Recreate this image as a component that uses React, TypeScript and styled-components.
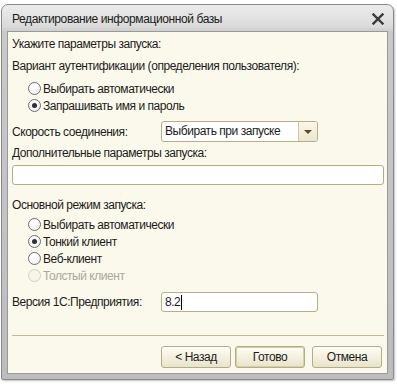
import styled, { createGlobalStyle } from 'styled-components';

const GlobalStyle = createGlobalStyle`
  html, body {
    margin: 0;
    padding: 0;
    background: #ffffff;
  }
  body {
    font-family: "Liberation Sans", Arial, sans-serif;
    font-size: 12px;
    letter-spacing: -0.45px;
    color: #1c1c1c;
  }
`;

const Page = styled.div`
  width: 397px;
  height: 385px;
  padding: 4px 0 0 1px;
  box-sizing: border-box;
`;

const Window = styled.div`
  width: 393px;
  height: 376px;
  box-sizing: border-box;
  display: flex;
  flex-direction: column;
  border-radius: 7px 7px 2px 2px;
  border: 1px solid #8a8a8a;
  background: linear-gradient(to bottom, #ececec 0px, #dadada 22px, #c9c9c9 27px, #bdbdbd 100%);
  padding: 0 5px 5px 5px;
  box-shadow: 1px 1px 2px rgba(0, 0, 0, 0.25);
`;

const TitleBar = styled.div`
  height: 26px;
  display: flex;
  align-items: center;
  justify-content: space-between;
  padding: 0 4px 0 5px;
`;

const Title = styled.div`
  font-size: 12px;
  letter-spacing: -0.4px;
  color: #202020;
  padding-top: 1px;
`;

const Close = styled.div`
  width: 12px;
  height: 12px;
  margin-top: 1px;
  display: flex;
`;

const Body = styled.div`
  flex: 1;
  background: #fbf9eb;
  border: 1px solid #9a9a9a;
  padding: 4px 3px 0 4px;
  display: flex;
  flex-direction: column;
`;

const Label = styled.div<{ $mt?: number }>`
  height: 17px;
  line-height: 17px;
  margin-top: ${(p) => p.$mt ?? 0}px;
  white-space: nowrap;
`;

const RadioList = styled.div<{ $mt?: number }>`
  display: flex;
  flex-direction: column;
  margin-top: ${(p) => p.$mt ?? 0}px;
  padding-left: 16px;
`;

const RadioRow = styled.div<{ $disabled?: boolean }>`
  height: 17px;
  display: flex;
  align-items: center;
  gap: 2px;
  color: ${(p) => (p.$disabled ? '#a8a8a0' : '#1c1c1c')};
`;

const RadioCircle = styled.span<{ $checked?: boolean; $disabled?: boolean }>`
  width: 11px;
  height: 11px;
  border-radius: 50%;
  border: 1px solid ${(p) => (p.$disabled ? '#d2d0c4' : '#6e6e6e')};
  background: ${(p) =>
    p.$disabled ? '#f7f5ea' : 'radial-gradient(circle at 40% 35%, #ffffff 30%, #e6e6e6 100%)'};
  display: flex;
  align-items: center;
  justify-content: center;
  flex-shrink: 0;
  &::after {
    content: '';
    width: 5px;
    height: 5px;
    border-radius: 50%;
    background: #303030;
    display: ${(p) => (p.$checked ? 'block' : 'none')};
  }
`;

const FieldRow = styled.div<{ $mt?: number }>`
  display: flex;
  align-items: center;
  margin-top: ${(p) => p.$mt ?? 0}px;
`;

const FieldLabel = styled.div`
  width: 149px;
  white-space: nowrap;
`;

const Combo = styled.div`
  width: 157px;
  height: 21px;
  box-sizing: border-box;
  border: 1px solid #b6ae86;
  border-radius: 3px;
  background: #ffffff;
  display: flex;
  align-items: stretch;
  overflow: hidden;
`;

const ComboText = styled.div`
  flex: 1;
  padding-left: 3px;
  line-height: 19px;
  white-space: nowrap;
`;

const ComboButton = styled.div`
  width: 18px;
  border-left: 1px solid #cfc8a4;
  background: linear-gradient(to bottom, #fbf8ea, #ece6cc);
  display: flex;
  align-items: center;
  justify-content: center;
  &::after {
    content: '';
    border-left: 4px solid transparent;
    border-right: 4px solid transparent;
    border-top: 4px solid #5a4a1e;
    margin-top: 1px;
  }
`;

const TextInput = styled.div<{ $width?: number; $mt?: number }>`
  width: ${(p) => (p.$width ? `${p.$width}px` : 'auto')};
  height: 20px;
  box-sizing: border-box;
  margin-top: ${(p) => p.$mt ?? 0}px;
  border: 1px solid #b6ae86;
  border-radius: 3px;
  background: #ffffff;
  padding-left: 3px;
  line-height: 18px;
  display: flex;
  align-items: center;
`;

const Caret = styled.span`
  width: 1px;
  height: 15px;
  background: #000000;
  margin-left: 1px;
`;

const Separator = styled.div`
  margin-top: 23px;
  height: 1px;
  background: #c2b993;
`;

const ButtonBar = styled.div`
  margin-top: 10px;
  display: flex;
  justify-content: flex-end;
  padding-right: 2px;
`;

const Button = styled.div<{ $default?: boolean; $ml?: number }>`
  width: 70px;
  height: 22px;
  box-sizing: border-box;
  margin-left: ${(p) => p.$ml ?? 0}px;
  border: 1px solid #b3ac8a;
  border-radius: 3px;
  background: linear-gradient(to bottom, #fefdf6, #f3efdd 55%, #e9e3ca);
  box-shadow: ${(p) => (p.$default ? 'inset 0 0 0 1px #d8cfa6' : 'none')};
  display: flex;
  align-items: center;
  justify-content: center;
  color: #1c1c1c;
`;

const radiosAuth = [
  { label: 'Выбирать автоматически', checked: false },
  { label: 'Запрашивать имя и пароль', checked: true },
];

const radiosMode = [
  { label: 'Выбирать автоматически', checked: false },
  { label: 'Тонкий клиент', checked: true },
  { label: 'Веб-клиент', checked: false },
  { label: 'Толстый клиент', checked: false, disabled: true },
];

export default function App() {
  return (
    <>
      <GlobalStyle />
      <Page>
        <Window>
          <TitleBar>
            <Title>Редактирование информационной базы</Title>
            <Close>
              <svg width="12" height="12" viewBox="0 0 12 12">
                <path d="M1.5 1.5 L10.5 10.5 M10.5 1.5 L1.5 10.5" stroke="#3a3a3a" strokeWidth="2.4" strokeLinecap="square" />
              </svg>
            </Close>
          </TitleBar>
          <Body>
            <Label>Укажите параметры запуска:</Label>
            <Label $mt={5}>Вариант аутентификации (определения пользователя):</Label>
            <RadioList $mt={5}>
              {radiosAuth.map((r) => (
                <RadioRow key={r.label}>
                  <RadioCircle $checked={r.checked} />
                  {r.label}
                </RadioRow>
              ))}
            </RadioList>
            <FieldRow $mt={7}>
              <FieldLabel>Скорость соединения:</FieldLabel>
              <Combo>
                <ComboText>Выбирать при запуске</ComboText>
                <ComboButton />
              </Combo>
            </FieldRow>
            <Label $mt={3}>Дополнительные параметры запуска:</Label>
            <TextInput $mt={3} />
            <Label $mt={12}>Основной режим запуска:</Label>
            <RadioList $mt={2}>
              {radiosMode.map((r) => (
                <RadioRow key={r.label} $disabled={r.disabled}>
                  <RadioCircle $checked={r.checked} $disabled={r.disabled} />
                  {r.label}
                </RadioRow>
              ))}
            </RadioList>
            <FieldRow $mt={8}>
              <FieldLabel>Версия 1С:Предприятия:</FieldLabel>
              <TextInput $width={157}>
                8.2
                <Caret />
              </TextInput>
            </FieldRow>
            <Separator />
            <ButtonBar>
              <Button>&lt; Назад</Button>
              <Button $default $ml={4}>Готово</Button>
              <Button $ml={7}>Отмена</Button>
            </ButtonBar>
          </Body>
        </Window>
      </Page>
    </>
  );
}
